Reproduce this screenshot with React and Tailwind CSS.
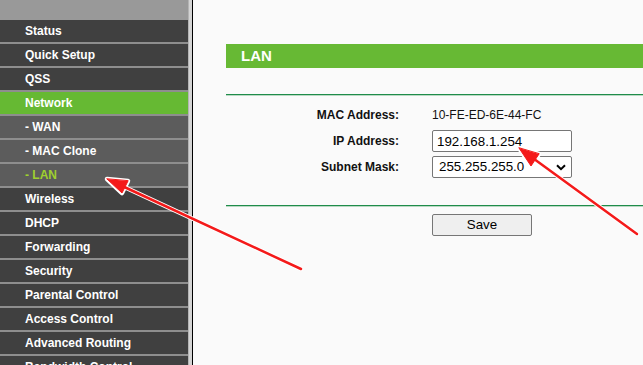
import React from 'react'

const menu = [
  { label: 'Status' },
  { label: 'Quick Setup' },
  { label: 'QSS' },
  { label: 'Network', active: true },
  { label: '- WAN', sub: true },
  { label: '- MAC Clone', sub: true },
  { label: '- LAN', sub: true, current: true },
  { label: 'Wireless' },
  { label: 'DHCP' },
  { label: 'Forwarding' },
  { label: 'Security' },
  { label: 'Parental Control' },
  { label: 'Access Control' },
  { label: 'Advanced Routing' },
  { label: 'Bandwidth Control' },
]

const rowClass = (item) => {
  if (item.active) return 'bg-[#66b933] text-white'
  if (item.current) return 'bg-[#5c5c5c] text-[#9fd02e]'
  if (item.sub) return 'bg-[#5c5c5c] text-white'
  return 'bg-[#404040] text-white'
}

const Sidebar = () => (
  <div className="w-[188px] shrink-0 flex flex-col bg-[#8e8e8e]">
    <div className="h-[20px] shrink-0 bg-[#999999]" />
    {menu.map((item) => (
      <div
        key={item.label}
        className={`h-[22px] mb-[2px] shrink-0 flex items-center pl-[25px] text-[12px] font-bold leading-none ${rowClass(item)}`}
      >
        {item.label}
      </div>
    ))}
  </div>
)

// red annotation arrows drawn over the page
const Arrows = () => (
  <svg
    className="absolute inset-0 pointer-events-none"
    width="643"
    height="365"
    viewBox="0 0 643 365"
  >
    <g stroke="#ffffff" strokeWidth="4.5" strokeLinecap="round" fill="#ffffff" strokeLinejoin="round">
      <line x1="301" y1="269" x2="120" y2="185" />
      <polygon points="107,179 122,193 128,181" />
      <line x1="637" y1="234" x2="530" y2="156" />
      <polygon points="519,148 531,166 539,154" />
    </g>
    <g stroke="#f41a1a" strokeWidth="2.5" strokeLinecap="round" fill="#f41a1a" strokeLinejoin="round">
      <line x1="301" y1="269" x2="120" y2="185" />
      <polygon points="107,179 122,193 128,181" strokeWidth="1" />
      <line x1="637" y1="234" x2="530" y2="156" />
      <polygon points="519,148 531,166 539,154" strokeWidth="1" />
    </g>
  </svg>
)

const GreenLine = () => (
  <div className="h-[2px] border-t border-[#1f8c4a] bg-[#b9d9c3]" />
)

export default function App() {
  return (
    <div className="relative w-[643px] h-[365px] overflow-hidden flex font-['Liberation_Sans',Arial,sans-serif]">
      <Sidebar />
      <div className="w-px shrink-0 bg-[#b4b4b4]" />
      <div className="w-[3px] shrink-0 bg-[#d4d4d4]" />
      <div className="w-px shrink-0 bg-black" />

      {/* Content */}
      <div className="flex-1 bg-[#fafafa] pl-[33px] pt-[44px]">
        <div className="h-[24px] bg-[#67b934] flex items-center pl-[15px] text-white text-[15px] font-bold">
          LAN
        </div>

        <div className="mt-[26px]">
          <GreenLine />
        </div>

        <div className="mt-[8px] grid grid-cols-[173px_140px] gap-x-[33px] gap-y-[4px] text-[12px] text-[#111]">
          <div className="h-[22px] flex items-center justify-end font-bold">MAC Address:</div>
          <div className="h-[22px] flex items-center">10-FE-ED-6E-44-FC</div>

          <div className="h-[22px] flex items-center justify-end font-bold">IP Address:</div>
          <input
            readOnly
            value="192.168.1.254"
            className="h-[22px] w-[140px] bg-white border border-[#767676] rounded-[2px] px-[4px] text-[13.33px] text-black outline-none font-['Liberation_Sans',Arial,sans-serif]"
          />

          <div className="h-[22px] flex items-center justify-end font-bold">Subnet Mask:</div>
          <div className="relative h-[22px] w-[140px]">
            <select
              defaultValue="255.255.255.0"
              className="appearance-none h-[22px] w-[140px] bg-white border border-[#767676] rounded-[2px] pl-[6px] text-[13.33px] text-black outline-none font-['Liberation_Sans',Arial,sans-serif]"
            >
              <option>255.255.255.0</option>
            </select>
            <svg
              className="absolute right-[6px] top-[8px] pointer-events-none"
              width="10"
              height="7"
              viewBox="0 0 10 7"
            >
              <path d="M1 1.2 L5 5.2 L9 1.2" stroke="#000" strokeWidth="2" fill="none" />
            </svg>
          </div>
        </div>

        <div className="mt-[27px]">
          <GreenLine />
        </div>

        <button className="mt-[7px] ml-[206px] w-[100px] h-[22px] bg-[#efefef] border border-[#767676] rounded-[2px] text-[13.33px] text-black flex items-center justify-center font-['Liberation_Sans',Arial,sans-serif]">
          Save
        </button>
      </div>

      <Arrows />
    </div>
  )
}
